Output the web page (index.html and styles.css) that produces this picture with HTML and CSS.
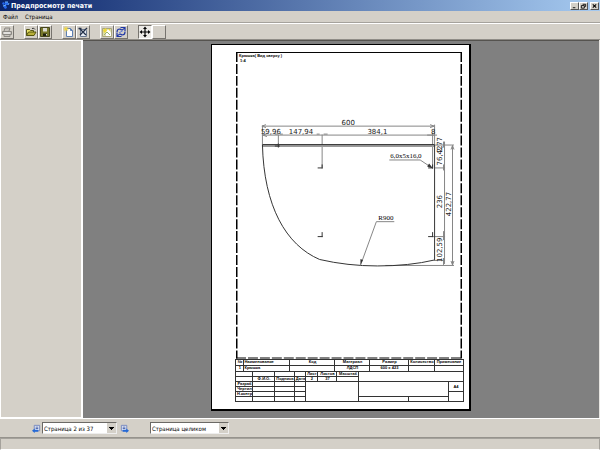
FILE: index.html
```html
<!DOCTYPE html>
<html lang="ru">
<head>
<meta charset="utf-8">
<title>Предпросмотр печати</title>
<link rel="stylesheet" href="styles.css">
</head>
<body>
<header class="titlebar">
  <svg class="app-icon" viewBox="0 0 9 9"><path d="M1 2l2-1 1 2-2 1zM4 1l3 0 0 3-3 0zM2 5l3-1 1 3-2 1z" fill="#2467ee"/><path d="M4 1h3M2 5l3-1M7 4l1-2" stroke="#69b4ff" fill="none"/></svg>
  <h1 class="caption">Предпросмотр печати</h1>
  <div class="window-buttons">
    <button class="win" aria-label="Свернуть"><svg viewBox="0 0 8 7"><path d="M2 5.5h3" stroke="#000"/></svg></button>
    <button class="win" aria-label="Восстановить"><svg viewBox="0 0 8 7"><path d="M3 1.5h3.5v2.500h-1M1.500 3h3.500v3h-3.500z" stroke="#000" fill="none"/></svg></button>
    <button class="win close" aria-label="Закрыть"><svg viewBox="0 0 8 7"><path d="M2 1.500l4 4M6 1.500l-4 4" stroke="#000" stroke-width="1.200"/></svg></button>
  </div>
</header>
<nav class="menu">
  <button class="menu-item">Файл</button>
  <button class="menu-item">Страница</button>
</nav>
<div class="toolbar">
  <div class="group">
    <button class="tool" aria-label="Печать"><svg viewBox="0 0 12 12"><path d="M3 5l1-3h5l-1 3M1.500 5.500h9v3h-9zM3 8.500h6v2h-6z" fill="#c6c3bd" stroke="#8b8883"/><path d="M3 7h6" stroke="#fff"/></svg></button>
  </div>
  <div class="group">
    <button class="tool" aria-label="Открыть"><svg viewBox="0 0 12 12"><path d="M1.500 9.500v-6h3l1 1h3v1.500" fill="#e9e36a" stroke="#55551c"/><path d="M1.500 9.500l2-3.500h7.500l-2 3.500z" fill="#b9b03a" stroke="#55550f"/><path d="M7 2.500q2-1 3 1" fill="none" stroke="#333"/></svg></button>
    <button class="tool" aria-label="Сохранить"><svg viewBox="0 0 12 12"><path d="M1.500 1.500h9v9h-9z" fill="#77772b" stroke="#45451c"/><path d="M4 2h4v3.500h-4z" fill="#dcdcd4"/><path d="M4 7.500h4v2.500h-4z" fill="#20200f"/><path d="M7 8h1v1.500h-1z" fill="#ddd"/></svg></button>
  </div>
  <div class="group">
    <button class="tool" aria-label="Новая страница"><svg viewBox="0 0 12 12"><path d="M3.500 2.500h4l2 2v6h-6z" fill="#fff" stroke="#5d7fb2"/><path d="M7.500 2.500v2h2" fill="none" stroke="#5d7fb2"/><path d="M3 .5v5M.5 3h5M1.500 1.500l3 3M4.500 1.500l-3 3" stroke="#efd43c"/></svg></button>
    <button class="tool" aria-label="Удалить страницу"><svg viewBox="0 0 12 12"><path d="M3.500 3.500h5l1 1v6h-6z" fill="#e8edf5" stroke="#6a7890"/><path d="M2 2l7 7M10 2l-7 7M1.500 2.500h3" stroke="#243048" stroke-width="1.300"/></svg></button>
  </div>
  <div class="group">
    <button class="tool" aria-label="Изображение"><svg viewBox="0 0 12 12"><path d="M1.500 2.500h9v8h-9z" fill="#dedcae" stroke="#a9a77a"/><path d="M5 5l3-2 2 4v3h-5z" fill="#fff"/><path d="M2 4l3-2 1 3-3 2zM7 3h2v2" fill="#edd838"/><path d="M3 9l3-3 3 3" fill="none" stroke="#9ab46c"/></svg></button>
    <button class="tool" aria-label="Обновить"><svg viewBox="0 0 12 12"><path d="M5.500 1.500h4.500v4M9.500 2q-2 3-4.500 1q-3 0-3 3M6.500 10.500h-4.500v-4M2.500 10q2-3 4.500-1q3 0 3-3" fill="none" stroke="#2038a8" stroke-width="1.200"/><path d="M4 7l4-2.500" stroke="#5f78d8"/></svg></button>
  </div>
  <div class="group">
    <button class="tool pressed" aria-label="Переместить"><svg viewBox="0 0 12 12"><path d="M6 2v8M2 6h8" stroke="#000" stroke-width="1.200"/><path d="M6 .5l2 2.500h-4zM6 11.500l2-2.500h-4zM.5 6l2.500-2v4zM11.500 6l-2.500-2v4z"/></svg></button>
    <button class="tool" aria-label="Инструмент"></button>
  </div>
</div>
<main class="workspace">
  <aside class="side"></aside>
  <section class="preview">
    <article class="sheet">
      <svg class="drawing" viewBox="236 52 227 308" role="img" aria-label="Чертёж крышки">
        <path class="frame" d="M236 52.500h227"/>
        <path class="frame-dash" d="M236.700 52v308M462.300 52v308"/>
        <path class="frame-foot" d="M236 359.500h227"/>
        <text class="note" x="239" y="57">Крышка( Вид сверху )</text>
        <text class="note" x="240" y="62">1:4</text>
        <path class="thin" d="M262.500 145v-19M262 126.500h173M262 135.500h173M278.500 135v12M322.500 135v33M433.500 133v35M435.500 125v20"/>
        <path class="thin" d="M436 145.500h19M436 168.500h10M434 237.500h12M386 266.500h69M445.500 142v123M453.500 146v120M435 261.500h11"/>
        <path class="thin" d="M266 125l-4 1.500 4 1.500M431 125l4 1.500-4 1.500M267 134l-4 1.500 4 1.500M275 134.500h3M280 134.500h3M317 134.500h3M324 134.500h4M428 135.500h10M452 150l1.500-4 1.500 4M452 262l1.500 4 1.500-4M444.500 165v6M444.500 232v9M444.500 259v7M444.500 142v6"/>
        <path class="plate" d="M262 146.500h174"/>
        <path class="outline" d="M262.500 145h173v116Q410 267 378 267Q348 267 320 260.500C286 246 264 207 262.500 145"/>
        <path class="mark" d="M275 146.500h5M278.500 144v4M318 168.500h5M322.500 165v4M318 237.500h5M322.500 233v5M429 237.500h5M433.500 233v5M429 168.500h5M433.500 165v4"/>
        <path class="thin" d="M390 160.500h31l12 8M395 222.500h-18l-16 44"/>
        <path d="M434 169l-6-2 2-3zM361 266l0-6 2.500 1z" fill="#333"/>
        <g class="dim">
          <text x="342" y="125">600</text>
          <text x="261" y="134">59,96</text>
          <text x="289" y="134">147,94</text>
          <text x="368" y="134">384,1</text>
          <text x="432" y="134">8</text>
          <text transform="translate(443 166) rotate(-90)">76,42</text>
          <text transform="translate(443 153) rotate(-90)">2,77</text>
          <text transform="translate(443 209) rotate(-90)">236</text>
          <text transform="translate(452 217) rotate(-90)">422,77</text>
          <text transform="translate(443 263) rotate(-90)">102,59</text>
        </g>
        <g class="label">
          <text x="391" y="159">6,0x5x16,0</text>
          <text x="379" y="221">R900</text>
        </g>
      </svg>
      <table class="spec parts">
        <colgroup><col class="w8"><col class="w46"><col class="w45"><col class="w35"><col class="w39"><col class="w26"><col class="w28"></colgroup>
        <tr><th>№</th><th class="left">Наименование</th><th>Код</th><th>Материал</th><th>Размер</th><th>Количество</th><th>Примечание</th></tr>
        <tr><td>1</td><td class="left">Крышка</td><td></td><td>ЛДСП</td><td>600 x 423</td><td></td><td></td></tr>
      </table>
      <table class="spec stamp">
        <colgroup><col class="w17"><col class="w22"><col class="w20"><col class="w11"><col class="w12"><col class="w19"><col class="w22"><col class="w50"><col class="w40"><col class="w14"></colgroup>
        <tr><td></td><td></td><td></td><td></td><th>Лист</th><th>Листов</th><th>Масштаб</th><td colspan="3" rowspan="2"></td></tr>
        <tr><td></td><th>Ф.И.О.</th><th>Подпись</th><th>Дата</th><td>2</td><td>37</td><td></td></tr>
        <tr><th>Разраб</th><td></td><td></td><td></td><td colspan="3" rowspan="4"></td><td colspan="2" rowspan="3"></td><td rowspan="2">А4</td></tr>
        <tr><th>Чертил</th><td></td><td></td><td></td></tr>
        <tr><th>Н.контр</th><td></td><td></td><td></td><td rowspan="2"></td></tr>
        <tr><td></td><td></td><td></td><td></td><td></td><td></td></tr>
      </table>
    </article>
  </section>
</main>
<footer class="pager">
  <button class="step" aria-label="Предыдущая страница"><svg viewBox="0 0 10 10"><path d="M2.500 1.500h6v6h-6z" fill="#e6ebf7" stroke="#7185bc"/><path d="M4 3.500h3M4 5h3" stroke="#4660a8"/><path d="M0 7.500l3-2.500v1.500h4v2h-4v1.500z" fill="#2469d6"/></svg></button>
  <select class="combo" aria-label="Страница"><option>Страница 2 из 37</option></select>
  <button class="step" aria-label="Следующая страница"><svg viewBox="0 0 10 10"><path d="M1.500 1.500h6v6h-6z" fill="#e6ebf7" stroke="#7185bc"/><path d="M3 3.500h3M3 5h3" stroke="#4660a8"/><path d="M10 7.500l-3-2.500v1.500h-4v2h4v1.500z" fill="#2469d6"/></svg></button>
  <select class="combo scale" aria-label="Масштаб"><option>Страница целиком</option></select>
</footer>
<div class="status"></div>
</body>
</html>
```
FILE: styles.css
```css
* { box-sizing: border-box; }
body {
  margin: 0;
  height: 100vh;
  display: flex;
  flex-direction: column;
  overflow: hidden;
  background: #d4d0c8;
  color: #000;
  font: 6px/9px "DejaVu Sans Condensed", "DejaVu Sans", sans-serif;
}
button { margin: 0; padding: 0; border: 0; background: none; font: inherit; color: inherit; }
svg { display: block; }

.titlebar {
  display: flex;
  align-items: center;
  height: 11px;
  padding: 0 1px;
  background: linear-gradient(90deg, #0a246a, #a6caf0);
}
.app-icon { width: 9px; height: 9px; }
.caption {
  flex: 1;
  margin: 0 0 0 1px;
  color: #fff;
  font: bold 7px/10px "DejaVu Sans Condensed", "DejaVu Sans", sans-serif;
}
.window-buttons { display: flex; }
.win {
  width: 9px;
  height: 8px;
  background: #d4d0c8;
  border: 1px solid;
  border-color: #fff #555 #555 #fff;
}
.win svg { width: 100%; height: 100%; }
.close { margin-left: 2px; }

.menu {
  display: flex;
  gap: 7px;
  height: 12px;
  padding-left: 3px;
  border-bottom: 1px solid #a5a29c;
}
.toolbar {
  display: flex;
  gap: 10px;
  height: 17px;
  padding: 1px 0;
  border-top: 1px solid #fff;
  border-bottom: 1px solid #908d87;
}
.group { display: flex; }
.tool {
  display: grid;
  place-items: center;
  width: 14px;
  height: 14px;
  border: 1px solid;
  border-color: #fff #77746f #77746f #fff;
}
.tool svg { width: 12px; height: 12px; }
.pressed { border-color: #77746f #fff #fff #77746f; background: #eceae6; }

.workspace { flex: 1; min-height: 0; display: flex; border-right: 1px solid #e8e6e2; }
.side { width: 83px; border: 1px solid #fff; border-width: 1px 2px 1px 1px; }
.preview {
  flex: 1;
  min-width: 0;
  display: flex;
  justify-content: center;
  padding: 3px 0 7px;
  border-top: 1px solid #55534f;
  background: #808080;
}
.sheet {
  display: flex;
  flex-direction: column;
  height: 100%;
  aspect-ratio: 259 / 367;
  padding: 7px 5px 7px 23px;
  background: #fff;
  border: 1px solid #000;
  border-width: 1px 2px 2px 1px;
}
.drawing { flex: 1; min-height: 0; width: 100%; }
.frame { stroke: #000; }
.frame-dash { stroke: #000; stroke-width: 1.5; stroke-dasharray: 10 2; }
.frame-foot { stroke: #000; stroke-dasharray: 10 2; }
.thin { fill: none; stroke: #858585; }
.plate { stroke: #999; stroke-width: 2; }
.outline { fill: none; stroke: #333; }
.mark { stroke: #333; }
.dim { font: 7px "DejaVu Sans", sans-serif; fill: #222; }
.label { font: 7px "Liberation Serif", serif; }
.note { font: bold 4px "Liberation Sans", sans-serif; }

.spec {
  width: 100%;
  table-layout: fixed;
  border-collapse: collapse;
  font: bold 4px/4px "Liberation Sans", sans-serif;
}
.spec th, .spec td {
  padding: 0;
  border: 1px solid #333;
  text-align: center;
  white-space: nowrap;
}
.spec .left { text-align: left; }
.parts tr { height: 6px; }
.stamp tr { height: 5px; }
.stamp tr:first-child td, .stamp tr:first-child th { border-top: 0; }
.w8 { width: 8px; }
.w11 { width: 11px; }
.w12 { width: 12px; }
.w14 { width: 14px; }
.w17 { width: 17px; }
.w19 { width: 19px; }
.w20 { width: 20px; }
.w22 { width: 22px; }
.w26 { width: 26px; }
.w28 { width: 28px; }
.w35 { width: 35px; }
.w39 { width: 39px; }
.w40 { width: 40px; }
.w45 { width: 45px; }
.w46 { width: 46px; }
.w50 { width: 50px; }

.pager {
  display: flex;
  align-items: center;
  gap: 1px;
  height: 20px;
  padding-left: 32px;
  border-top: 1px solid #fff;
  border-bottom: 1px solid #96938d;
}
.step svg { width: 9px; height: 9px; }
.step:last-of-type { margin-left: 2px; }
.combo {
  appearance: none;
  width: 75px;
  height: 12px;
  padding: 0 9px 0 1px;
  border: 1px solid;
  border-color: #6b6965 #eee #eee #6b6965;
  border-radius: 0;
  color: #000;
  font: inherit;
  background:
    conic-gradient(from -45deg at 50% 100%, #000 90deg, transparent 0) right 2px top 4px / 5px 3px no-repeat,
    linear-gradient(#d4d0c8, #d4d0c8) right / 9px 100% no-repeat,
    #fff;
}
.scale { width: 79px; margin-left: 20px; }
.status { height: 12px; border: 1px solid #a5a29c; border-bottom-color: #fff; }
```
